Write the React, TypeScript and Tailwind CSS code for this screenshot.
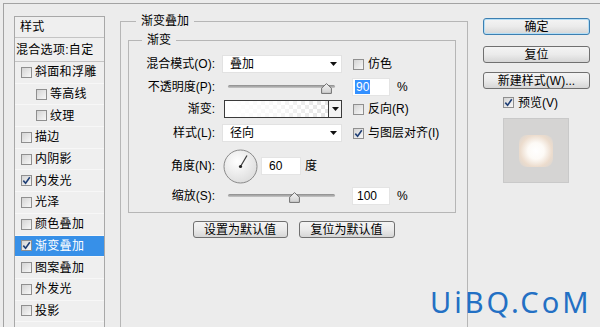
import React from "react";

const layers = [
  { name: "斜面和浮雕", checked: false, indent: false },
  { name: "等高线", checked: false, indent: true },
  { name: "纹理", checked: false, indent: true },
  { name: "描边", checked: false, indent: false },
  { name: "内阴影", checked: false, indent: false },
  { name: "内发光", checked: true, indent: false },
  { name: "光泽", checked: false, indent: false },
  { name: "颜色叠加", checked: false, indent: false },
  { name: "渐变叠加", checked: true, indent: false, active: true },
  { name: "图案叠加", checked: false, indent: false },
  { name: "外发光", checked: false, indent: false },
  { name: "投影", checked: false, indent: false },
];

const CheckBox = ({ checked = false }: { checked?: boolean }) => (
  <span className="inline-flex w-[11px] h-[11px] shrink-0 items-center justify-center border border-[#8f8f8f] bg-linear-to-br from-[#d4d4d4] to-[#f8f8f8]">
    {checked && (
      <svg width="9" height="9" viewBox="0 0 9 9">
        <path d="M1.3 4.6L3.6 7.2L7.8 1.3" fill="none" stroke="#1f3f76" strokeWidth="1.6" />
      </svg>
    )}
  </span>
);

const Arrow = () => (
  <svg width="7" height="4" viewBox="0 0 7 4">
    <path d="M0 0H7L3.5 4Z" fill="#111" />
  </svg>
);

const Select = ({ value }: { value: string }) => (
  <div className="w-[120px] h-[18px] bg-white border border-[#e2e2e2] flex items-center justify-between pl-[7px] pr-[4px]">
    <span>{value}</span>
    <Arrow />
  </div>
);

const Slider = ({ pos }: { pos: number }) => (
  <div className="relative w-[107px] h-[18px]">
    <div className="absolute left-0 right-0 top-[7px] h-[3px] rounded-full bg-linear-to-b from-[#8c8c8c] to-[#c8c8c8]" />
    <svg className="absolute top-[5px]" style={{ left: pos }} width="11" height="11" viewBox="0 0 11 11">
      <defs>
        <linearGradient id="thumb" x1="0" y1="0" x2="0" y2="1">
          <stop offset="0" stopColor="#f4f4f4" />
          <stop offset="1" stopColor="#cfcfcf" />
        </linearGradient>
      </defs>
      <path d="M5.5 0.6L10.4 5.2V10.4H0.6V5.2Z" fill="url(#thumb)" stroke="#6f6f6f" />
    </svg>
  </div>
);

const Field = ({ value, width = 38, selected = false }: { value: string; width?: number; selected?: boolean }) => (
  <div className={`h-[18px] bg-white border border-[#e4e4e4] flex items-center ${width === 40 ? "w-[40px] pl-[5px]" : "w-[38px] pl-[2px]"}`}>
    <span className={selected ? "bg-[#3390ff] text-white px-[1px]" : "px-[2px]"}>{value}</span>
  </div>
);

const Label = ({ children }: { children: React.ReactNode }) => (
  <span className="w-[86px] text-right shrink-0">{children}</span>
);

const Btn = ({ children, w, primary = false }: { children: React.ReactNode; w: string; primary?: boolean }) => (
  <div
    className={`${w} h-[17px] rounded-[3px] border flex items-center justify-center bg-linear-to-b from-[#f4f4f4] via-[#ebebeb] to-[#d6d6d6] ${
      primary ? "border-[#3c7fb1] shadow-[inset_0_0_0_1px_#b4def6]" : "border-[#707070]"
    }`}
  >
    {children}
  </div>
);

export default function App() {
  return (
    <div className="relative w-[600px] h-[327px] overflow-hidden bg-[#ececec] pt-[3px] pl-[3px] text-[12px] leading-[14px] text-black font-['Liberation_Sans','Noto_Sans_CJK_SC',sans-serif]">
      <div className="h-full border-t border-l border-[#a3a3a3] flex items-start">
        {/* style list */}
        <div className="mt-[12px] ml-[10px] w-[91px] h-[330px] border border-[#a8a8a8] bg-[#efefef] shrink-0 tracking-[0.3px]">
          <div className="h-[21px] border-b border-[#c4c4c4] pl-[5px] flex items-center">样式</div>
          <div className="h-[24px] border-b border-[#c4c4c4] pl-[1px] flex items-center">混合选项:自定</div>
          {layers.map((l) => (
            <div
              key={l.name}
              className={`h-[21.7px] flex items-center gap-[3px] border-b border-[#f7f7f7] ${l.indent ? "pl-[21px]" : "pl-[6px]"} ${
                l.active ? "bg-[#3790e8] text-white" : ""
              }`}
            >
              <CheckBox checked={l.checked} />
              <span>{l.name}</span>
            </div>
          ))}
        </div>

        {/* gradient overlay panel */}
        <fieldset className="mt-[10px] ml-[15px] w-[348px] h-[330px] shrink-0 border border-[#b6b6b6] pl-[7px]">
          <legend className="ml-[8px] px-[5px] leading-[14px]">渐变叠加</legend>
          <fieldset className="mt-[5px] w-[328px] border border-[#b6b6b6] pb-[7px]">
            <legend className="ml-[13px] px-[5px] leading-[14px]">渐变</legend>

            <div className="mt-[8px] h-[18px] flex items-center">
              <Label>混合模式(O):</Label>
              <div className="ml-[7px]">
                <Select value="叠加" />
              </div>
              <div className="ml-[11px] flex items-center gap-[4px]">
                <CheckBox />
                <span>仿色</span>
              </div>
            </div>

            <div className="mt-[5px] h-[18px] flex items-center">
              <Label>不透明度(P):</Label>
              <div className="ml-[13px]">
                <Slider pos={93} />
              </div>
              <div className="ml-[17px]">
                <Field value="90" selected />
              </div>
              <span className="ml-[7px]">%</span>
            </div>

            <div className="mt-[4px] h-[18px] flex items-center">
              <Label>渐变:</Label>
              <div className="ml-[9px] w-[118px] h-[18px] border border-[#3a3a3a] flex">
                <div className="flex-1 bg-[repeating-conic-gradient(#e4e4e4_0%_25%,#ffffff_0%_50%)] bg-[length:8px_8px]">
                  <div className="h-full bg-linear-to-r from-white via-white/70 to-transparent" />
                </div>
                <div className="w-[13px] border-l border-[#3a3a3a] bg-[#f3f3f3] flex items-center justify-center">
                  <Arrow />
                </div>
              </div>
              <div className="ml-[11px] flex items-center gap-[4px]">
                <CheckBox />
                <span>反向(R)</span>
              </div>
            </div>

            <div className="mt-[6px] h-[18px] flex items-center">
              <Label>样式(L):</Label>
              <div className="ml-[7px]">
                <Select value="径向" />
              </div>
              <div className="ml-[11px] flex items-center gap-[4px]">
                <CheckBox checked />
                <span>与图层对齐(I)</span>
              </div>
            </div>

            <div className="mt-[7px] h-[34px] flex items-center">
              <Label>角度(N):</Label>
              <svg className="ml-[8px]" width="35" height="35" viewBox="0 0 35 35">
                <defs>
                  <radialGradient id="dial" cx="0.4" cy="0.35" r="0.7">
                    <stop offset="0" stopColor="#ffffff" />
                    <stop offset="1" stopColor="#dcdcdc" />
                  </radialGradient>
                </defs>
                <circle cx="17.5" cy="17.5" r="16.5" fill="url(#dial)" stroke="#8a8a8a" />
                <line x1="17.5" y1="17.5" x2="24" y2="6.5" stroke="#3a3a3a" strokeWidth="1.2" />
                <circle cx="17.5" cy="17.5" r="1.6" fill="#222" />
              </svg>
              <div className="ml-[3px]">
                <Field value="60" width={40} />
              </div>
              <span className="ml-[4px]">度</span>
            </div>

            <div className="mt-[4px] h-[18px] flex items-center">
              <Label>缩放(S):</Label>
              <div className="ml-[13px]">
                <Slider pos={61} />
              </div>
              <div className="ml-[17px]">
                <Field value="100" />
              </div>
              <span className="ml-[7px]">%</span>
            </div>
          </fieldset>

          <div className="mt-[8px] flex justify-center gap-[11px] pr-[8px]">
            <Btn w="w-[95px]">设置为默认值</Btn>
            <Btn w="w-[96px]">复位为默认值</Btn>
          </div>
        </fieldset>

        {/* action buttons */}
        <div className="mt-[14px] ml-[15px] w-[107px] shrink-0 flex flex-col">
          <Btn w="w-[107px]" primary>
            确定
          </Btn>
          <div className="mt-[11px]">
            <Btn w="w-[107px]">复位</Btn>
          </div>
          <div className="mt-[9px]">
            <Btn w="w-[107px]">新建样式(W)...</Btn>
          </div>
          <div className="mt-[8px] ml-[20px] h-[11px] flex items-center gap-[4px]">
            <CheckBox checked />
            <span>预览(V)</span>
          </div>
          <div className="mt-[10px] ml-[20px] w-[66px] h-[65px] border border-[#c9c9c9] bg-[#d5d4d3] flex items-center justify-center">
            <div className="w-[34px] h-[32px] rounded-[8px] bg-[radial-gradient(circle,#ffffff_0%,#fdfaf6_35%,#ecdccd_68%,#d5d4d3_100%)]" />
          </div>
        </div>
      </div>

      <div className="absolute left-[430px] top-[287px] text-[29px] leading-[29px] tracking-[3px] text-[#2370c4] font-['Noto_Sans',sans-serif]">
        UiBQ.CoM
      </div>
    </div>
  );
}
